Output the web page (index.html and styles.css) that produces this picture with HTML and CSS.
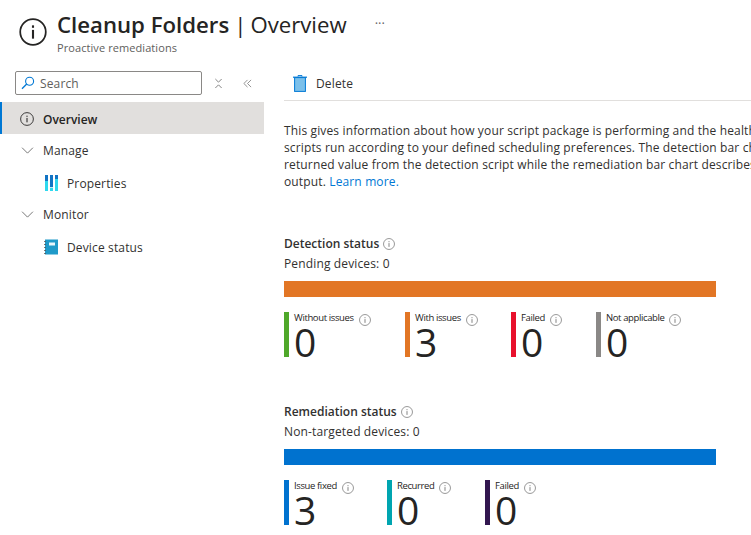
FILE: index.html
```html
<!DOCTYPE html>
<html lang="en">
<head>
<meta charset="utf-8">
<title>Cleanup Folders | Overview</title>
<link rel="stylesheet" href="styles.css">
</head>
<body>
<svg class="defs" width="0" height="0" aria-hidden="true">
  <symbol id="info" viewBox="0 0 16 16">
    <circle cx="8" cy="8" r="7.3" fill="none" stroke="currentColor" stroke-width="1"/>
    <rect x="7.4" y="6.8" width="1.2" height="5" fill="currentColor"/>
    <rect x="7.4" y="4.2" width="1.2" height="1.4" fill="currentColor"/>
  </symbol>
</svg>
<header class="page-head">
  <svg class="head-icon"><use href="#info"/></svg>
  <div class="head-text">
    <div class="title-row">
      <h1 class="title"><b>Cleanup Folders</b><span class="sep">|</span><span class="title-light">Overview</span></h1>
      <span class="more">···</span>
    </div>
    <div class="subtitle">Proactive remediations</div>
  </div>
</header>
<div class="body-row">
  <nav class="sidebar">
    <div class="search-row">
      <div class="search">
        <svg class="search-icon" viewBox="0 0 14 14"><circle cx="8.6" cy="5.2" r="4" fill="none" stroke="#0078d4" stroke-width="1.1"/><path d="M5.7 8 1 12.8" stroke="#0078d4" stroke-width="1.3" fill="none"/></svg>
        <span>Search</span>
      </div>
      <svg class="tool-icon first" viewBox="0 0 10 12"><path d="M1.5 1 5 4.5 8.5 1M1.5 11 5 7.5 8.5 11" fill="none" stroke="#777" stroke-width="1"/></svg>
      <svg class="tool-icon" viewBox="0 0 10 12"><path d="M5 2 1 6l4 4M9 2 5 6l4 4" fill="none" stroke="#888" stroke-width="1"/></svg>
    </div>
    <a class="nav-item selected"><svg class="nav-info"><use href="#info"/></svg><span>Overview</span></a>
    <a class="nav-item group"><svg class="chev" viewBox="0 0 14 8"><path d="M.8.8 7 7l6.2-6.2" fill="none" stroke="#666" stroke-width="1"/></svg><span>Manage</span></a>
    <a class="nav-item child">
      <svg class="leaf" viewBox="0 0 14 16">
        <rect x="1" y="0" width="3" height="6" fill="#1274c4"/><rect x="1" y="6" width="3" height="10" fill="#2fd8ee"/>
        <rect x="6" y="0" width="3" height="12" fill="#1274c4"/><rect x="6" y="12" width="3" height="1" fill="#bfeef8"/><rect x="6" y="13" width="3" height="3" fill="#2fd8ee"/>
        <rect x="11" y="0" width="3" height="4" fill="#1274c4"/><rect x="11" y="4" width="3" height="12" fill="#2fd8ee"/>
      </svg><span>Properties</span></a>
    <a class="nav-item group"><svg class="chev" viewBox="0 0 14 8"><path d="M.8.8 7 7l6.2-6.2" fill="none" stroke="#666" stroke-width="1"/></svg><span>Monitor</span></a>
    <a class="nav-item child">
      <svg class="leaf" viewBox="0 0 14 15">
        <rect x="1" y="0" width="13" height="15" fill="#1f9ac9"/><rect x="5" y="3" width="6" height="3" fill="#e8f6fc"/>
        <path d="M0 2h2M0 5h2M0 8h2M0 11h2M0 14h2" stroke="#555" stroke-width=".8"/>
      </svg><span>Device status</span></a>
  </nav>
  <main class="content">
    <div class="toolbar">
      <svg class="trash" viewBox="0 0 14 17"><path d="M5 1.5V.6h4v.9" fill="none" stroke="#0078d4"/><path d="M0 2.2h14" stroke="#0078d4" stroke-width="1.2"/><rect x="1.6" y="2.6" width="10.8" height="13.8" fill="#7cc0ea" stroke="#0078d4"/></svg>
      <span>Delete</span>
    </div>
    <p class="intro">This gives information about how your script package is performing and the health of your devices. The<br>scripts run according to your defined scheduling preferences. The detection bar chart describes the<br>returned value from the detection script while the remediation bar chart describes the remediation<br>output. <a class="link">Learn more.</a></p>

    <section class="status detection">
      <h2 class="status-title">Detection status <svg class="small-info"><use href="#info"/></svg></h2>
      <div class="status-sub">Pending devices: 0</div>
      <div class="bar orange"></div>
      <div class="metrics">
        <div class="metric m1"><i class="mark green"></i><div><div class="m-label">Without issues<svg class="small-info"><use href="#info"/></svg></div><div class="m-value">0</div></div></div>
        <div class="metric m2"><i class="mark orange"></i><div><div class="m-label">With issues<svg class="small-info"><use href="#info"/></svg></div><div class="m-value">3</div></div></div>
        <div class="metric m3"><i class="mark red"></i><div><div class="m-label">Failed<svg class="small-info"><use href="#info"/></svg></div><div class="m-value">0</div></div></div>
        <div class="metric"><i class="mark gray"></i><div><div class="m-label">Not applicable<svg class="small-info"><use href="#info"/></svg></div><div class="m-value">0</div></div></div>
      </div>
    </section>

    <section class="status remediation">
      <h2 class="status-title">Remediation status <svg class="small-info"><use href="#info"/></svg></h2>
      <div class="status-sub">Non-targeted devices: 0</div>
      <div class="bar blue"></div>
      <div class="metrics">
        <div class="metric r1"><i class="mark blue"></i><div><div class="m-label">Issue fixed<svg class="small-info"><use href="#info"/></svg></div><div class="m-value">3</div></div></div>
        <div class="metric r2"><i class="mark teal"></i><div><div class="m-label">Recurred<svg class="small-info"><use href="#info"/></svg></div><div class="m-value">0</div></div></div>
        <div class="metric"><i class="mark purple"></i><div><div class="m-label">Failed<svg class="small-info"><use href="#info"/></svg></div><div class="m-value">0</div></div></div>
      </div>
    </section>
  </main>
</div>
</body>
</html>
```
FILE: styles.css
```css
* { box-sizing: border-box; }
html, body { margin: 0; height: 535px; overflow: hidden; background: #fff; }
body { width: 751px; font-family: "Open Sans", "Noto Sans", sans-serif; font-size: 12px; letter-spacing: .14px; color: #323130; }
.defs { position: absolute; }

.page-head { display: flex; height: 71px; padding: 10px 0 0 19px; color: #252423; }
.head-icon { width: 28px; height: 28px; margin: 8px 10px 0 0; flex: none; }
.title-row { display: flex; align-items: flex-start; height: 29px; }
.title { margin: 0; font-size: 22.2px; line-height: 29px; font-weight: 400; letter-spacing: 0; white-space: nowrap; }
.title b { font-weight: 600; }
.sep { margin: 0 4px 0 5px; }
.title-light { font-weight: 400; }
.more { margin: 0 0 0 28px; font-size: 13px; line-height: 26px; letter-spacing: 0; color: #666; }
.subtitle { margin-top: 1px; font-size: 11px; line-height: 16px; letter-spacing: .08px; color: #605e5c; }

.body-row { display: flex; height: 464px; }
.sidebar { width: 264px; flex: none; }
.search-row { display: flex; align-items: center; height: 31px; padding: 0 0 7px 15px; }
.search { display: flex; align-items: center; width: 187px; height: 24px; border: 1px solid #8a8886; border-radius: 2px; padding-left: 5px; color: #605e5c; }
.search-icon { width: 14px; height: 14px; margin-right: 5px; }
.tool-icon { width: 9px; height: 11px; margin-left: 20px; }
.tool-icon.first { margin-left: 12px; }

.nav-item { display: flex; align-items: center; height: 32px; color: #323130; white-space: nowrap; }
.selected { background: #e1dfdd; border-left: 2px solid #0078d4; padding: 2px 0 0 18px; font-weight: 600; letter-spacing: 0; color: #252423; }
.nav-info { width: 14px; height: 14px; margin-right: 9px; }
.group { padding-left: 21px; }
.chev { width: 13px; height: 7px; margin-right: 9px; }
.child { padding: 2px 0 0 44px; }
.leaf { width: 14px; height: 16px; margin-right: 9px; }

.content { flex: 1; min-width: 0; padding-left: 20px; overflow: hidden; }
.toolbar { display: flex; align-items: center; height: 30px; padding: 1px 0 5px 9px; border-bottom: 1px solid #e1dfdd; white-space: nowrap; }
.trash { width: 14px; height: 17px; margin-right: 9px; }
.intro { margin: 21px 0 0; font-size: 12px; line-height: 17px; white-space: nowrap; color: #323130; }
.link { color: #0078d4; }

.status { width: 432px; }
.detection { margin-top: 45px; }
.remediation { margin-top: 46px; }
.status-title { margin: 0; display: flex; align-items: center; gap: 4px; font-size: 12px; line-height: 17px; font-weight: 600; letter-spacing: 0; color: #323130; }
.status-sub { margin-top: 3px; line-height: 17px; white-space: nowrap; }
.bar { height: 16px; margin-top: 9px; }
.metrics { display: flex; margin-top: 15px; }
.metric { display: flex; height: 45px; }
.mark { display: block; width: 5px; height: 45px; margin-right: 5px; flex: none; }
.m-label { display: flex; align-items: center; gap: 5px; height: 14px; font-size: 9.5px; line-height: 14px; letter-spacing: -.38px; white-space: nowrap; color: #252423; margin-top: -1px; }
.m-label .small-info { margin-top: 3px; }
.m-value { font-size: 39px; line-height: 30px; margin-top: 2px; color: #252423; letter-spacing: 0; }
.small-info { width: 12px; height: 12px; color: #777; flex: none; }

.m1 { width: 121px; } .m2 { width: 106px; } .m3 { width: 85px; }
.r1 { width: 103px; } .r2 { width: 98px; }

.orange { background: #e27625; }
.blue { background: #0072cf; }
.green { background: #4fa82a; }
.red { background: #e8112d; }
.gray { background: #8a8886; }
.teal { background: #00a5b0; }
.purple { background: #32164f; }
```
